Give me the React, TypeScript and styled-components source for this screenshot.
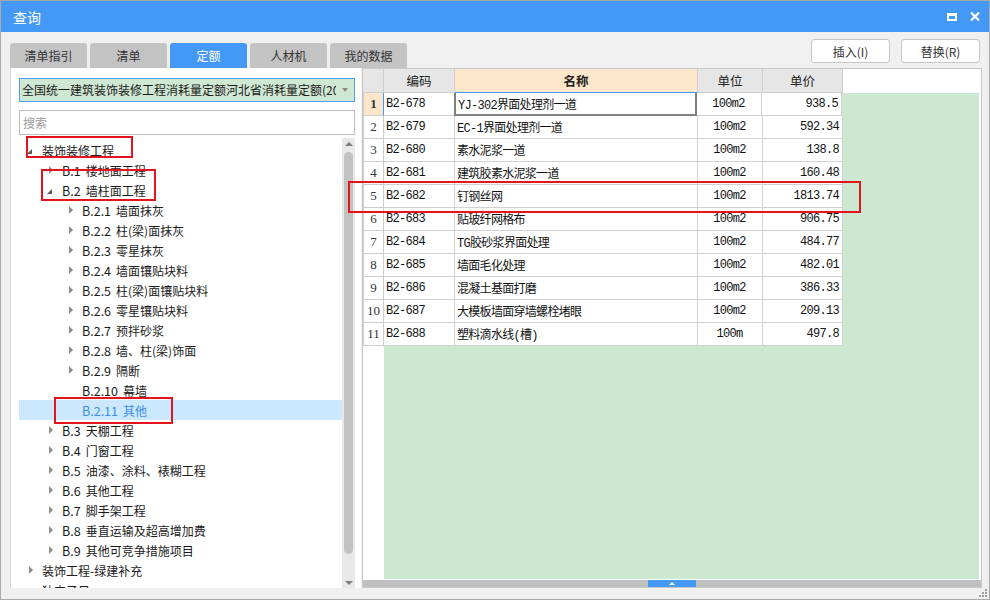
import React from 'react';
import styled, { createGlobalStyle } from 'styled-components';

const GlobalStyle = createGlobalStyle`
  html, body {
    margin: 0;
    padding: 0;
    background: #ffffff;
  }
  body {
    font-family: "Noto Sans CJK SC", "Noto Sans", sans-serif;
  }
  * {
    box-sizing: border-box;
  }
`;

interface TreeItem {
  code?: string;
  label: string;
  level: number;
  arrow: 'open' | 'closed' | 'none';
  selected?: boolean;
}

interface Quota {
  code: string;
  name: string;
  unit: string;
  price: string;
}

const treeItems: TreeItem[] = [
  { label: '装饰装修工程', level: 0, arrow: 'open' },
  { code: 'B.1', label: '楼地面工程', level: 1, arrow: 'closed' },
  { code: 'B.2', label: '墙柱面工程', level: 1, arrow: 'open' },
  { code: 'B.2.1', label: '墙面抹灰', level: 2, arrow: 'closed' },
  { code: 'B.2.2', label: '柱(梁)面抹灰', level: 2, arrow: 'closed' },
  { code: 'B.2.3', label: '零星抹灰', level: 2, arrow: 'closed' },
  { code: 'B.2.4', label: '墙面镶贴块料', level: 2, arrow: 'closed' },
  { code: 'B.2.5', label: '柱(梁)面镶贴块料', level: 2, arrow: 'closed' },
  { code: 'B.2.6', label: '零星镶贴块料', level: 2, arrow: 'closed' },
  { code: 'B.2.7', label: '预拌砂浆', level: 2, arrow: 'closed' },
  { code: 'B.2.8', label: '墙、柱(梁)饰面', level: 2, arrow: 'closed' },
  { code: 'B.2.9', label: '隔断', level: 2, arrow: 'closed' },
  { code: 'B.2.10', label: '幕墙', level: 2, arrow: 'none' },
  { code: 'B.2.11', label: '其他', level: 2, arrow: 'none', selected: true },
  { code: 'B.3', label: '天棚工程', level: 1, arrow: 'closed' },
  { code: 'B.4', label: '门窗工程', level: 1, arrow: 'closed' },
  { code: 'B.5', label: '油漆、涂料、裱糊工程', level: 1, arrow: 'closed' },
  { code: 'B.6', label: '其他工程', level: 1, arrow: 'closed' },
  { code: 'B.7', label: '脚手架工程', level: 1, arrow: 'closed' },
  { code: 'B.8', label: '垂直运输及超高增加费', level: 1, arrow: 'closed' },
  { code: 'B.9', label: '其他可竞争措施项目', level: 1, arrow: 'closed' },
  { label: '装饰工程-绿建补充', level: 0, arrow: 'closed' },
  { label: '独立子目', level: 0, arrow: 'none' },
];

const quotas: Quota[] = [
  { code: 'B2-678', name: 'YJ-302界面处理剂一道', unit: '100m2', price: '938.5' },
  { code: 'B2-679', name: 'EC-1界面处理剂一道', unit: '100m2', price: '592.34' },
  { code: 'B2-680', name: '素水泥浆一道', unit: '100m2', price: '138.8' },
  { code: 'B2-681', name: '建筑胶素水泥浆一道', unit: '100m2', price: '160.48' },
  { code: 'B2-682', name: '钉钢丝网', unit: '100m2', price: '1813.74' },
  { code: 'B2-683', name: '贴玻纤网格布', unit: '100m2', price: '906.75' },
  { code: 'B2-684', name: 'TG胶砂浆界面处理', unit: '100m2', price: '484.77' },
  { code: 'B2-685', name: '墙面毛化处理', unit: '100m2', price: '482.01' },
  { code: 'B2-686', name: '混凝土基面打磨', unit: '100m2', price: '386.33' },
  { code: 'B2-687', name: '大模板墙面穿墙螺栓堵眼', unit: '100m2', price: '209.13' },
  { code: 'B2-688', name: '塑料滴水线(槽)', unit: '100m', price: '497.8' },
];

const tabs = ['清单指引', '清单', '定额', '人材机', '我的数据'];

const columns = [
  { key: 'code', title: '编码', width: 71, align: 'left' },
  { key: 'name', title: '名称', width: 243, align: 'left' },
  { key: 'unit', title: '单位', width: 65, align: 'center' },
  { key: 'price', title: '单价', width: 80, align: 'right' },
] as const;

const marks = [
  { x: 26, y: 136, w: 107, h: 22 },
  { x: 41, y: 169, w: 115, h: 32 },
  { x: 54, y: 397, w: 119, h: 27 },
  { x: 348, y: 181, w: 513, h: 32 },
];

const Window = styled.div`
  position: relative;
  width: 990px;
  height: 600px;
  display: flex;
  flex-direction: column;
  background: #f0f0f0;
  border: 1px solid #a9a9a9;
  overflow: hidden;
`;

const TitleBar = styled.div`
  height: 31px;
  flex-shrink: 0;
  display: flex;
  align-items: center;
  padding: 0 9px 0 12px;
  background: #4499f7;
  color: #ffffff;
  font-size: 14px;
`;

const Title = styled.div`
  flex: 1;
  line-height: 20px;
`;

const TitleButtons = styled.div`
  display: flex;
  align-items: center;
  gap: 13px;
`;

const MaxIcon = styled.div`
  width: 10px;
  height: 8px;
  border: 2px solid #ffffff;
  border-top-width: 3px;
`;

const Toolbar = styled.div`
  height: 36px;
  flex-shrink: 0;
  display: flex;
  padding: 0 9px 0 9px;
`;

const Tabs = styled.div`
  flex: 1;
  display: flex;
  align-items: flex-end;
  gap: 3px;
`;

const Tab = styled.div<{ $active?: boolean }>`
  width: 77px;
  height: 25px;
  display: flex;
  align-items: center;
  justify-content: center;
  border-radius: 3px 3px 0 0;
  background: ${(p) => (p.$active ? '#4499f7' : '#c3c3c3')};
  color: ${(p) => (p.$active ? '#ffffff' : '#333333')};
  font-size: 12px;
`;

const Buttons = styled.div`
  display: flex;
  gap: 11px;
  padding-top: 7px;
`;

const Button = styled.div`
  width: 79px;
  height: 24px;
  display: flex;
  align-items: center;
  justify-content: center;
  background: #ffffff;
  border: 1px solid #c6c6c6;
  border-radius: 3px;
  color: #333333;
  font-size: 12px;
`;

const Content = styled.div`
  height: 520px;
  flex-shrink: 0;
  display: flex;
  gap: 1px;
  padding: 0 7px 0 9px;
`;

const LeftPanel = styled.div`
  width: 351px;
  display: flex;
  flex-direction: column;
  background: #ffffff;
  border-left: 1px solid #d6d6d6;
  padding: 10px 6px 0 8px;
`;

const Dropdown = styled.div`
  height: 24px;
  flex-shrink: 0;
  display: flex;
  align-items: center;
  background: #cfe8d3;
  border: 1px solid #4a9ef7;
  padding: 0 6px 0 2px;
  font-size: 12px;
  color: #1a1a1a;
`;

const DropdownText = styled.div`
  flex: 1;
  white-space: nowrap;
  overflow: hidden;
  line-height: 20px;
`;

const DropArrow = styled.div`
  width: 0;
  height: 0;
  margin-left: 6px;
  border-left: 3.5px solid transparent;
  border-right: 3.5px solid transparent;
  border-top: 4px solid #8a8a8a;
`;

const Search = styled.input`
  height: 25px;
  flex-shrink: 0;
  margin-top: 8px;
  border: 1px solid #bcbcbc;
  padding: 0 3px;
  font-family: "Noto Sans CJK SC", sans-serif;
  font-size: 12px;
  outline: none;
  &::placeholder {
    color: #9a9a9a;
  }
`;

const TreeArea = styled.div`
  flex: 1;
  display: flex;
  margin-top: 3px;
  min-height: 0;
`;

const TreeList = styled.div`
  flex: 1;
  overflow: hidden;
  padding-top: 2px;
`;

const TreeRow = styled.div<{ $level: number; $selected?: boolean }>`
  height: 20px;
  display: flex;
  align-items: center;
  padding-left: ${(p) => 8 + p.$level * 20}px;
  background: ${(p) => (p.$selected ? '#cce8ff' : 'transparent')};
  color: ${(p) => (p.$selected ? '#3c8ee8' : '#1a1a1a')};
  font-size: 12px;
  white-space: nowrap;
`;

const TreeCode = styled.span`
  margin-right: 5px;
  font-size: 12.5px;
`;

const ArrowBox = styled.div`
  width: 15px;
  height: 20px;
  flex-shrink: 0;
  display: flex;
  align-items: center;
`;

const ClosedArrow = styled.div`
  width: 0;
  height: 0;
  margin-left: 2px;
  border-top: 4px solid transparent;
  border-bottom: 4px solid transparent;
  border-left: 4px solid #8c8c8c;
`;

const OpenArrow = styled.div`
  width: 0;
  height: 0;
  margin-top: 2px;
  border-left: 5px solid transparent;
  border-bottom: 5px solid #595959;
`;

const VScroll = styled.div`
  width: 13px;
  display: flex;
  flex-direction: column;
  align-items: center;
  background: #e8e8e8;
  padding: 4px 0 3px;
`;

const ScrollUp = styled.div`
  width: 0;
  height: 0;
  border-left: 4px solid transparent;
  border-right: 4px solid transparent;
  border-bottom: 4px solid #7c7c7c;
`;

const ScrollDown = styled.div`
  width: 0;
  height: 0;
  border-left: 4px solid transparent;
  border-right: 4px solid transparent;
  border-top: 4px solid #7c7c7c;
`;

const Thumb = styled.div`
  width: 9px;
  height: 402px;
  margin: 6px 0 auto;
  border-radius: 5px;
  background: #c2c2c2;
`;

const Grid = styled.div`
  width: 620px;
  display: flex;
  flex-direction: column;
  background: #ffffff;
  border: 1px solid #c8c8c8;
  font-family: "Liberation Mono", "Noto Sans CJK SC", monospace;
  font-size: 12px;
  color: #111111;
`;

const HeaderRow = styled.div`
  height: 24px;
  flex-shrink: 0;
  display: flex;
`;

const HeadCell = styled.div<{ $width: number; $main?: boolean }>`
  width: ${(p) => p.$width}px;
  height: 24px;
  display: flex;
  align-items: center;
  justify-content: center;
  background: ${(p) => (p.$main ? '#fde6c9' : '#e6e6e6')};
  border-right: 1px solid #cdcdcd;
  border-bottom: 1px solid ${(p) => (p.$main ? '#4499f7' : '#cdcdcd')};
  font-family: "Noto Sans CJK SC", sans-serif;
  font-size: 12.5px;
  font-weight: ${(p) => (p.$main ? 700 : 400)};
  color: #222222;
`;

const GridBody = styled.div`
  flex: 1;
  display: flex;
  padding: 0 2px 1px 0;
  min-height: 0;
`;

const RowNums = styled.div`
  width: 21px;
  flex-shrink: 0;
`;

const RowNum = styled.div<{ $current?: boolean }>`
  height: 23px;
  display: flex;
  align-items: center;
  justify-content: center;
  background: ${(p) => (p.$current ? '#fde6c9' : '#ffffff')};
  border-right: 1px solid ${(p) => (p.$current ? '#4499f7' : '#cdcdcd')};
  border-bottom: 1px solid #cdcdcd;
  border-left: 1px solid #cdcdcd;
  font-family: "Liberation Serif", serif;
  font-size: 13px;
  font-weight: ${(p) => (p.$current ? 700 : 400)};
  color: #333333;
`;

const DataArea = styled.div`
  flex: 1;
  background: #cde8d0;
`;

const DataRow = styled.div`
  height: 23px;
  display: flex;
`;

const Cell = styled.div<{ $width: number; $align: string; $current?: boolean }>`
  width: ${(p) => p.$width}px;
  height: 23px;
  display: flex;
  align-items: center;
  justify-content: ${(p) =>
    p.$align === 'right' ? 'flex-end' : p.$align === 'center' ? 'center' : 'flex-start'};
  padding: 0 3px 0 2px;
  background: #ffffff;
  border-right: ${(p) => (p.$current ? '2px solid #808080' : '1px solid #d2d2d2')};
  border-bottom: ${(p) => (p.$current ? '2px solid #808080' : '1px solid #d2d2d2')};
  border-left: ${(p) => (p.$current ? '2px solid #808080' : 'none')};
  margin-left: ${(p) => (p.$current ? '-1px' : '0')};
  white-space: nowrap;
  overflow: hidden;
  letter-spacing: -0.7px;
`;

const HScroll = styled.div`
  height: 7px;
  flex-shrink: 0;
  display: flex;
  justify-content: center;
  background: #c0c0c0;
`;

const HThumb = styled.div`
  width: 48px;
  display: flex;
  align-items: center;
  justify-content: center;
  background: #4499f7;
`;

const HThumbArrow = styled.div`
  width: 0;
  height: 0;
  border-left: 3px solid transparent;
  border-right: 3px solid transparent;
  border-bottom: 3px solid #ffffff;
`;

const Footer = styled.div`
  flex: 1;
  display: flex;
  justify-content: flex-end;
  align-items: flex-end;
  padding: 0 1px 1px 0;
`;

const Mark = styled.div<{ $x: number; $y: number; $w: number; $h: number }>`
  position: absolute;
  left: ${(p) => p.$x - 1}px;
  top: ${(p) => p.$y - 1}px;
  width: ${(p) => p.$w}px;
  height: ${(p) => p.$h}px;
  border: 2px solid #e3141d;
  pointer-events: none;
`;

const App: React.FC = () => {
  return (
    <>
      <GlobalStyle />
      <Window>
        <TitleBar>
          <Title>查询</Title>
          <TitleButtons>
            <MaxIcon />
            <svg width="10" height="9" viewBox="0 0 10 9">
              <path d="M1 0.5 L9 8.5 M9 0.5 L1 8.5" stroke="#ffffff" strokeWidth="2.2" />
            </svg>
          </TitleButtons>
        </TitleBar>

        <Toolbar>
          <Tabs>
            {tabs.map((t) => (
              <Tab key={t} $active={t === '定额'}>
                {t}
              </Tab>
            ))}
          </Tabs>
          <Buttons>
            <Button>插入(I)</Button>
            <Button>替换(R)</Button>
          </Buttons>
        </Toolbar>

        <Content>
          <LeftPanel>
            <Dropdown>
              <DropdownText>全国统一建筑装饰装修工程消耗量定额河北省消耗量定额(2012)</DropdownText>
              <DropArrow />
            </Dropdown>
            <Search placeholder="搜索" />
            <TreeArea>
              <TreeList>
                {treeItems.map((item) => (
                  <TreeRow key={item.label} $level={item.level} $selected={item.selected}>
                    <ArrowBox>
                      {item.arrow === 'closed' && <ClosedArrow />}
                      {item.arrow === 'open' && <OpenArrow />}
                    </ArrowBox>
                    {item.code && <TreeCode>{item.code}</TreeCode>}
                    {item.label}
                  </TreeRow>
                ))}
              </TreeList>
              <VScroll>
                <ScrollUp />
                <Thumb />
                <ScrollDown />
              </VScroll>
            </TreeArea>
          </LeftPanel>

          <Grid>
            <HeaderRow>
              <HeadCell $width={21} />
              {columns.map((c) => (
                <HeadCell key={c.key} $width={c.width} $main={c.key === 'name'}>
                  {c.title}
                </HeadCell>
              ))}
            </HeaderRow>
            <GridBody>
              <RowNums>
                {quotas.map((q, i) => (
                  <RowNum key={q.code} $current={i === 0}>
                    {i + 1}
                  </RowNum>
                ))}
              </RowNums>
              <DataArea>
                {quotas.map((q, i) => (
                  <DataRow key={q.code}>
                    {columns.map((c) => (
                      <Cell
                        key={c.key}
                        $width={c.width}
                        $align={c.align}
                        $current={i === 0 && c.key === 'name'}
                      >
                        {q[c.key]}
                      </Cell>
                    ))}
                  </DataRow>
                ))}
              </DataArea>
            </GridBody>
            <HScroll>
              <HThumb>
                <HThumbArrow />
              </HThumb>
            </HScroll>
          </Grid>
        </Content>

        <Footer>
          <svg width="9" height="9" viewBox="0 0 9 9">
            <rect x="6" y="0" width="2" height="2" fill="#a0a0a0" />
            <rect x="3" y="3" width="2" height="2" fill="#a0a0a0" />
            <rect x="6" y="3" width="2" height="2" fill="#a0a0a0" />
            <rect x="0" y="6" width="2" height="2" fill="#a0a0a0" />
            <rect x="3" y="6" width="2" height="2" fill="#a0a0a0" />
            <rect x="6" y="6" width="2" height="2" fill="#a0a0a0" />
          </svg>
        </Footer>

        {marks.map((m, i) => (
          <Mark key={i} $x={m.x} $y={m.y} $w={m.w} $h={m.h} />
        ))}
      </Window>
    </>
  );
};

export default App;
